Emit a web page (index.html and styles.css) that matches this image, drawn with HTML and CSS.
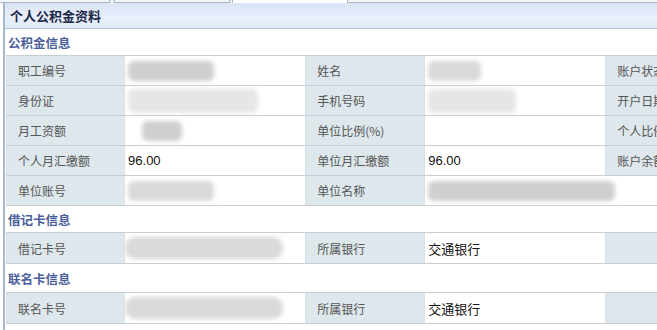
FILE: index.html
```html
<!DOCTYPE html>
<html lang="zh-CN">
<head>
  <meta charset="UTF-8" />
  <title>个人公积金资料</title>
  <link rel="stylesheet" href="styles.css">
</head>
<body>

  <!-- tab strip, only the bottom edge shows -->
  <div class="tabs">
    <span class="tab"></span>
    <span class="tab"></span>
    <span class="tab active"></span>
    <span class="tab-rest"></span>
  </div>

  <div class="panel">
    <div class="panel-title">个人公积金资料</div>

    <div class="section">公积金信息</div>
    <table class="info">
      <colgroup>
        <col class="c-label"><col class="c-value"><col class="c-label2">
        <col class="c-value"><col class="c-label2"><col class="c-value">
      </colgroup>
      <tr>
        <td class="label">职工编号</td>
        <td class="value"><span class="mask mask-dark w86"></span></td>
        <td class="label">姓名</td>
        <td class="value"><span class="mask w53"></span></td>
        <td class="label">账户状态</td>
        <td class="value"></td>
      </tr>
      <tr>
        <td class="label">身份证</td>
        <td class="value"><span class="mask mask-light w130"></span></td>
        <td class="label">手机号码</td>
        <td class="value"><span class="mask mask-light w88"></span></td>
        <td class="label">开户日期</td>
        <td class="value"></td>
      </tr>
      <tr>
        <td class="label">月工资额</td>
        <td class="value"><span class="mask mask-dark w40 indent"></span></td>
        <td class="label">单位比例(%)</td>
        <td class="value"></td>
        <td class="label">个人比例(%)</td>
        <td class="value"></td>
      </tr>
      <tr>
        <td class="label">个人月汇缴额</td>
        <td class="value">96.00</td>
        <td class="label">单位月汇缴额</td>
        <td class="value">96.00</td>
        <td class="label">账户余额</td>
        <td class="value"></td>
      </tr>
      <tr>
        <td class="label">单位账号</td>
        <td class="value"><span class="mask w86"></span></td>
        <td class="label">单位名称</td>
        <td class="value" colspan="3"><span class="mask mask-dark w187"></span></td>
      </tr>
    </table>

    <div class="section">借记卡信息</div>
    <table class="info card">
      <colgroup>
        <col class="c-label"><col class="c-value"><col class="c-label2">
        <col class="c-value"><col class="c-label2"><col class="c-value">
      </colgroup>
      <tr>
        <td class="label">借记卡号</td>
        <td class="value"><span class="mask w158 pull"></span></td>
        <td class="label">所属银行</td>
        <td class="value">交通银行</td>
        <td class="label"></td>
        <td class="value"></td>
      </tr>
    </table>

    <div class="section tall">联名卡信息</div>
    <table class="info card">
      <colgroup>
        <col class="c-label"><col class="c-value"><col class="c-label2">
        <col class="c-value"><col class="c-label2"><col class="c-value">
      </colgroup>
      <tr>
        <td class="label">联名卡号</td>
        <td class="value"><span class="mask w158 pull"></span></td>
        <td class="label">所属银行</td>
        <td class="value">交通银行</td>
        <td class="label"></td>
        <td class="value"></td>
      </tr>
    </table>
  </div>

</body>
</html>
```

FILE: styles.css
```css
html, body {
  margin: 0;
  padding: 0;
  background: #fff;
  overflow: hidden;
}

body {
  font-family: "Noto Sans CJK SC", "Liberation Sans", sans-serif;
  font-size: 12px;
  color: #222;
  width: 657px;
  height: 330px;
}

/* tabs */
.tabs {
  display: flex;
  height: 3px;
  background: #f3f5f9;
}

.tab {
  width: 110px;
  border-right: 1px solid #a9b6c8;
  border-bottom: 1px solid #a9b6c8;
  box-sizing: border-box;
}

.tab + .tab {
  width: 116px;
  margin-left: 4px;
  border-left: 1px solid #a9b6c8;
}

.tab.active {
  background: #fff;
  border-bottom: none;
  margin-left: 2px;
}

.tab-rest {
  flex: 1;
  border-bottom: 1px solid #a9b6c8;
  margin-top: 1px;
  box-sizing: border-box;
}

/* panel */
.panel {
  margin-left: 3px;
  border-left: 2px solid #a8b7cb;
  min-height: 327px;
}

.panel-title {
  height: 25px;
  line-height: 25px;
  padding-left: 5px;
  font-size: 13px;
  font-weight: bold;
  color: #1c2a48;
  background: linear-gradient(#dae4f5, #e9effb 60%, #e2eaf8);
  border-bottom: 1px solid #b2c1d4;
}

.section {
  height: 26px;
  line-height: 27px;
  padding-left: 3px;
  font-size: 12.5px;
  font-weight: bold;
  color: #4c5f9c;
}

.section.tall {
  height: 28px;
  line-height: 29px;
}

.info {
  border-collapse: collapse;
  table-layout: fixed;
  width: 900px;
  margin-left: 1px;
}

.c-label { width: 118px; }
.c-label2 { width: 119px; }
.c-value { width: 181px; }

.info td {
  height: 29px;
  padding: 0;
  border-top: 1px solid #c7cfd5;
  border-bottom: 1px solid #c7cfd5;
  border-left: 1px solid #d9e1e6;
  white-space: nowrap;
  overflow: hidden;
}

.card td {
  height: 30px;
}

.info .label {
  background: #dde7ec;
  color: #555;
  padding-left: 11px;
}

.info .value {
  background: #fff;
  color: #111;
  font-family: "Liberation Sans", "Noto Sans CJK SC", sans-serif;
  font-size: 13px;
  padding-left: 3px;
}

/* blurred personal data */
.mask {
  display: inline-block;
  vertical-align: middle;
  height: 20px;
  background: #d9d9d9;
  filter: blur(2px);
  border-radius: 6px;
}

.mask-dark { background: #cfcfcf; }
.mask-light { background: #e6e6e6; height: 24px; }

.indent { margin-left: 14px; }
.pull { margin-left: -3px; height: 22px; border-radius: 10px; }

.w40 { width: 40px; }
.w53 { width: 53px; }
.w86 { width: 86px; }
.w88 { width: 88px; }
.w130 { width: 130px; }
.w158 { width: 158px; }
.w187 { width: 187px; }
```
